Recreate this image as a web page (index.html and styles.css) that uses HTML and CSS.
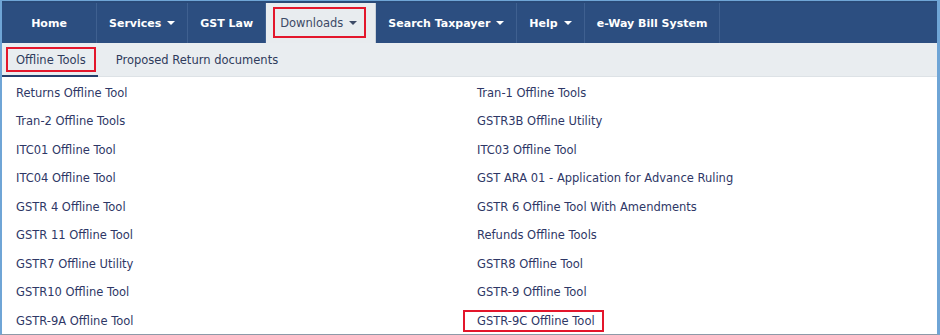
FILE: index.html
```html
<!DOCTYPE html>
<html lang="en">
<head>
<meta charset="utf-8">
<title>Downloads - Offline Tools</title>
<link rel="stylesheet" href="styles.css">
</head>
<body>
<div class="frame">
  <nav class="navbar">
    <a class="nav-item home">Home</a>
    <a class="nav-item">Services <span class="caret"></span></a>
    <a class="nav-item">GST Law</a>
    <a class="nav-item active"><span class="mark">Downloads <span class="caret"></span></span></a>
    <a class="nav-item">Search Taxpayer <span class="caret"></span></a>
    <a class="nav-item">Help <span class="caret"></span></a>
    <a class="nav-item">e-Way Bill System</a>
    <span class="nav-fill"></span>
  </nav>
  <div class="subnav">
    <a class="sub-item current"><span class="mark">Offline Tools</span></a>
    <a class="sub-item">Proposed Return documents</a>
  </div>
  <div class="tools">
    <a class="tool">Returns Offline Tool</a>
    <a class="tool">Tran-1 Offline Tools</a>
    <a class="tool">Tran-2 Offline Tools</a>
    <a class="tool">GSTR3B Offline Utility</a>
    <a class="tool">ITC01 Offline Tool</a>
    <a class="tool">ITC03 Offline Tool</a>
    <a class="tool">ITC04 Offline Tool</a>
    <a class="tool">GST ARA 01 - Application for Advance Ruling</a>
    <a class="tool">GSTR 4 Offline Tool</a>
    <a class="tool">GSTR 6 Offline Tool With Amendments</a>
    <a class="tool">GSTR 11 Offline Tool</a>
    <a class="tool">Refunds Offline Tools</a>
    <a class="tool">GSTR7 Offline Utility</a>
    <a class="tool">GSTR8 Offline Tool</a>
    <a class="tool">GSTR10 Offline Tool</a>
    <a class="tool">GSTR-9 Offline Tool</a>
    <a class="tool">GSTR-9A Offline Tool</a>
    <a class="tool"><span class="hl">GSTR-9C Offline Tool</span></a>
  </div>
</div>
</body>
</html>
```

FILE: styles.css
```css
* { box-sizing: border-box; }
html, body { margin: 0; padding: 0; background: #ffffff; }
body {
  font-family: "DejaVu Sans", Verdana, sans-serif;
  width: 940px;
  height: 335px;
  overflow: hidden;
}
.frame {
  width: 940px;
  height: 335px;
  border-top: 1px solid #6fa5d6;
  border-left: 2px solid #6fa5d6;
  border-right: 3px solid #6fa5d6;
  border-bottom: 1px solid #8d9aa8;
  display: flex;
  flex-direction: column;
}
.navbar {
  display: flex;
  height: 42px;
  background: #2c4e80;
  border-top: 2px solid #2a4a78;
  flex: none;
}
.nav-item {
  display: flex;
  align-items: center;
  justify-content: center;
  padding: 0 12px;
  color: #ffffff;
  font-weight: bold;
  font-size: 11px;
  border-right: 1px solid #3f6090;
  white-space: nowrap;
  gap: 6px;
}
.nav-item.home { width: 95px; }
.nav-item.active {
  background: #e8ecef;
  color: #3c4a66;
  font-weight: normal;
  font-size: 11.5px;
  padding: 4px 9px 5px 7px;
  align-items: stretch;
  border-right: 1px solid #c9d0d8;
}
.nav-item.active .mark {
  display: flex;
  align-items: center;
  gap: 6px;
  padding: 0 7px 0 5px;
  border: 2px solid #e3162b;
}
.caret {
  display: inline-block;
  width: 0;
  height: 0;
  border-left: 4px solid transparent;
  border-right: 4px solid transparent;
  border-top: 4px solid currentColor;
}
.nav-fill { flex: 1; }
.subnav {
  display: flex;
  height: 34px;
  background: #e9edf0;
  border-bottom: 1px solid #dde2e6;
  flex: none;
  font-size: 11.5px;
  color: #2f3b5c;
}
.sub-item {
  display: flex;
  align-items: center;
  padding: 0 18px;
  white-space: nowrap;
}
.sub-item.current {
  padding: 4px 2px 3px 4px;
  border-bottom: 2px solid #233f6b;
  margin-bottom: -1px;
  align-items: stretch;
}
.sub-item.current .mark {
  display: flex;
  align-items: center;
  padding: 0 8px 0 8px;
  border: 2px solid #e3162b;
}
.tools {
  display: grid;
  grid-template-columns: 461px 1fr;
  grid-auto-rows: 28.5px;
  flex: 1;
  font-size: 11.5px;
  color: #2e3766;
}
.tool {
  display: flex;
  align-items: center;
  padding-left: 14px;
  padding-top: 3px;
  white-space: nowrap;
}
.hl {
  display: inline-block;
  line-height: 14px;
  padding: 2px 7px 2px 12px;
  margin-left: -14px;
  border: 2px solid #e3162b;
}
```
